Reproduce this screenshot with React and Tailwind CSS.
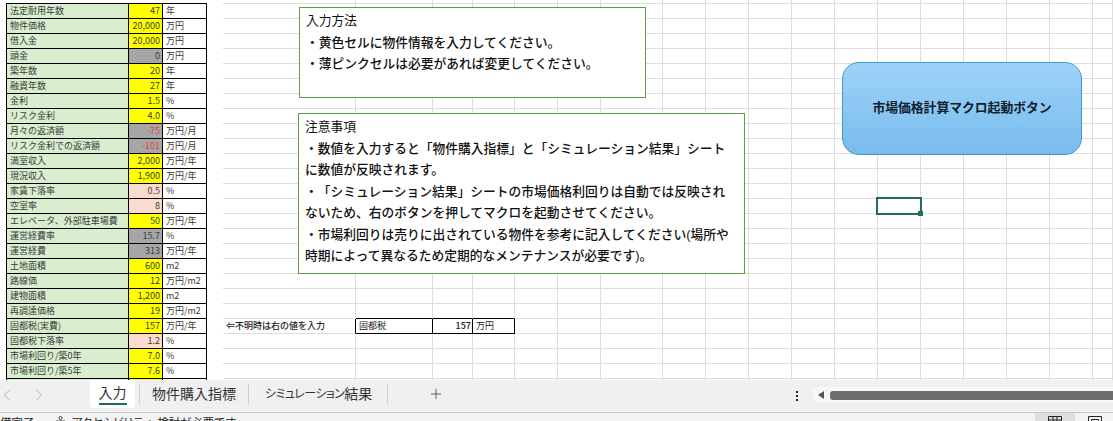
import React from "react";
import { ChevronLeft, ChevronRight, Plus } from "lucide-react";

const Y = "bg-[#ffff00]";
const G = "bg-[#a6a6a6]";
const P = "bg-[#fadccf]";

const rows = [
  ["法定耐用年数", "47", "年", Y],
  ["物件価格", "20,000", "万円", Y],
  ["借入金", "20,000", "万円", Y],
  ["頭金", "0", "万円", G],
  ["築年数", "20", "年", Y],
  ["融資年数", "27", "年", Y],
  ["金利", "1.5", "%", Y],
  ["リスク金利", "4.0", "%", Y],
  ["月々の返済額", "-75", "万円/月", G, true],
  ["リスク金利での返済額", "-101", "万円/月", G, true],
  ["満室収入", "2,000", "万円/年", Y],
  ["現況収入", "1,900", "万円/年", Y],
  ["家賃下落率", "0.5", "%", P],
  ["空室率", "8", "%", P],
  ["エレベータ、外部駐車場費", "50", "万円/年", Y],
  ["運営経費率", "15.7", "%", G],
  ["運営経費", "313", "万円/年", G],
  ["土地面積", "600", "m2", Y],
  ["路線価", "12", "万円/m2", Y],
  ["建物面積", "1,200", "m2", Y],
  ["再調達価格", "19", "万円/m2", Y],
  ["固都税(実費)", "157", "万円/年", Y],
  ["固都税下落率", "1.2", "%", P],
  ["市場利回り/築0年", "7.0", "%", Y],
  ["市場利回り/築5年", "7.6", "%", Y],
];

const COLS = 18;

const InputTable = () => (
  <div className="w-[223px] shrink-0 bg-white pl-[6px] pt-[3px]">
    <div className="grid w-[201px] grid-cols-[122px_34px_44px] border-l border-t border-black font-['Noto_Sans_CJK_JP',sans-serif] text-[9px] leading-[14px] text-[#3a3a3a]">
      {rows.map(([label, value, unit, color, minus]) => (
        <React.Fragment key={label}>
          <div className="h-[15px] whitespace-nowrap border-b border-r border-black bg-[#d8eecf] pl-[3px]">{label}</div>
          <div className={`h-[15px] border-b border-r border-black pr-[2px] text-right ${color} ${minus ? "text-[#e2403c]" : ""}`}>{value}</div>
          <div className="h-[15px] whitespace-nowrap border-b border-r border-black bg-white pl-[3px]">{unit}</div>
        </React.Fragment>
      ))}
      <div className="h-[2px] border-r border-black bg-[#d8eecf]" />
      <div className="h-[2px] border-r border-black bg-[#ffff00]" />
      <div className="h-[2px] border-r border-black bg-white" />
    </div>
  </div>
);

// blank cells of the sheet; row 21 holds the small 固都税 block
const cellBorder = (r, c) => {
  if (r === 21 && c === 0) return "border-b-[#dedede] border-r-black";
  if (r === 21 && c <= 3) return "border-b-black border-r-black";
  if (r === 20 && c >= 1 && c <= 3) return "border-b-black border-r-[#dedede]";
  return "border-b-[#dedede] border-r-[#dedede]";
};

const Sheet = () => (
  <div className="grid w-[890px] grid-cols-[133px_77px_40px_42px_43px_43px_62px_43px_43px_43px_43px_43px_43px_43px_43px_43px_43px_20px] grid-rows-[4px_repeat(25,15px)_2px] bg-white">
    {Array.from({ length: 27 * COLS }).map((_, i) => {
      const c = i % COLS;
      const r = Math.floor(i / COLS) - 1;
      const last = r === 25;
      return (
        <div
          key={i}
          className={`overflow-hidden whitespace-nowrap border-r font-['Noto_Sans_CJK_JP',sans-serif] text-[9px] leading-[14px] text-[#222] ${last ? "" : "border-b"} ${cellBorder(r, c)}`}
        >
          {r === 21 && c === 0 && <span className="pl-[3px] font-medium">⇐不明時は右の値を入力</span>}
          {r === 21 && c === 1 && <span className="pl-[3px]">固都税</span>}
          {r === 21 && c === 2 && <div className="pr-[1px] text-right font-medium">157</div>}
          {r === 21 && c === 3 && <span className="pl-[3px]">万円</span>}
        </div>
      );
    })}
  </div>
);

const Note = ({ className, lines }) => (
  <div className={`absolute border-[1.5px] border-[#5b9f3f] bg-white pl-[6px] pt-[2px] text-[12.75px] font-medium leading-[21.5px] text-[#111] [text-spacing-trim:space-all] ${className}`}>
    {lines.map((line, i) => (
      <div key={i} className={`whitespace-nowrap ${i === 0 ? "font-normal" : ""}`}>{line}</div>
    ))}
  </div>
);

const Tab = ({ children, active }) => (
  <div className={`flex h-[27px] items-center whitespace-nowrap text-[14px] text-[#333] ${active ? "relative" : ""}`}>
    {children}
    {active && <span className="absolute bottom-[2px] left-0 right-0 h-[2px] bg-[#1f6e4a]" />}
  </div>
);

const Divider = () => <div className="h-[20px] w-px bg-[#cfcfcf]" />;

export default function App() {
  return (
    <div className="flex h-[421px] w-[1113px] flex-col overflow-hidden bg-white font-['Liberation_Sans','Noto_Sans_CJK_JP',sans-serif]">
      <div className="relative flex h-[380px] shrink-0 overflow-hidden">
        <InputTable />
        <Sheet />

        <Note
          className="left-[299px] top-[7px] h-[91px] w-[347px]"
          lines={["入力方法", "・黄色セルに物件情報を入力してください。", "・薄ピンクセルは必要があれば変更してください。"]}
        />
        <Note
          className="left-[298px] top-[113px] h-[161px] w-[447px]"
          lines={[
            "注意事項",
            "・数値を入力すると「物件購入指標」と「シミュレーション結果」シート",
            "に数値が反映されます。",
            "・「シミュレーション結果」シートの市場価格利回りは自動では反映され",
            "ないため、右のボタンを押してマクロを起動させてください。",
            "・市場利回りは売りに出されている物件を参考に記入してください(場所や",
            "時期によって異なるため定期的なメンテナンスが必要です)。",
          ]}
        />

        <div className="absolute left-[842px] top-[62px] flex h-[93px] w-[240px] items-center justify-center rounded-[17px] border border-[#3f9ac9] bg-gradient-to-b from-[#9dd3f9] to-[#78bbec] pb-[1px] text-[12.8px] font-bold text-[#10202c]">
          市場価格計算マクロ起動ボタン
        </div>

        <div className="absolute left-[876px] top-[197px] h-[18px] w-[46px] border-2 border-[#23704a]">
          <span className="absolute -bottom-[3px] -right-[3px] h-[5px] w-[5px] bg-[#23704a]" />
        </div>
      </div>

      <div className="flex h-[32px] shrink-0 items-start bg-[#f0f0f0] text-[#333]">
        <div className="flex h-[30px] w-[90px] shrink-0 items-center text-[#a9a9a9]">
          <ChevronLeft size={20} strokeWidth={1.1} className="-ml-[3px]" />
          <ChevronRight size={20} strokeWidth={1.1} className="ml-[12px]" />
        </div>
        <div className="flex h-[28px] w-[45px] shrink-0 justify-center rounded-b-[4px] bg-white">
          <Tab active>入力</Tab>
        </div>
        <div className="flex h-[28px] items-center">
          <div className="ml-[4px]"><Divider /></div>
          <div className="ml-[12px] w-[84px]"><Tab>物件購入指標</Tab></div>
          <div className="ml-[12px]"><Divider /></div>
          <div className="ml-[16px] w-[108px]">
            <Tab>
              <span className="text-[12px] tracking-[-0.55px] [font-feature-settings:'palt']">シミュレーション</span>
              結果
            </Tab>
          </div>
          <div className="ml-[14px]"><Divider /></div>
          <Plus size={16} strokeWidth={1.1} className="ml-[40px] text-[#333]" />
        </div>
        <div className="ml-auto flex h-[30px] w-[320px] items-center">
          <div className="flex w-[7px] flex-col items-center gap-[2px] pt-[2px]">
            <span className="h-[2px] w-[2px] bg-[#222]" />
            <span className="h-[2px] w-[2px] bg-[#222]" />
            <span className="h-[2px] w-[2px] bg-[#222]" />
          </div>
          <div className="ml-[13px] flex h-[16px] flex-1 items-center rounded-l-[6px] bg-[#f7f7f7] pl-[5px]">
            <span className="h-0 w-0 border-y-[4.5px] border-r-[6px] border-y-transparent border-r-[#555]" />
            <span className="ml-[6px] h-[9px] flex-1 rounded-l-[3px] bg-[#6e6e6e]" />
          </div>
        </div>
      </div>

      <div className="relative flex h-[9px] shrink-0 items-start overflow-hidden border-t border-[#c8c8c8] bg-[#f3f3f3] text-[11.3px] leading-[16px] text-[#222]">
        <span className="-ml-[11px] mt-[2px] w-[66px] shrink-0 whitespace-nowrap">準備完了</span>
        <svg width="11" height="11" viewBox="0 0 11 11" className="mt-[3px] shrink-0 text-[#444]" fill="none" stroke="currentColor">
          <circle cx="5.5" cy="2" r="1.5" />
          <path d="M1 5h9M5.5 5v3" />
        </svg>
        <span className="ml-[6px] mt-[2px] whitespace-nowrap">
          <span className="[font-feature-settings:'palt']">アクセシビリティ: </span>
          検討が必要です
        </span>
        <div className="ml-auto flex h-full">
          <div className="flex h-full w-[40px] justify-center bg-[#dedede] pt-[3px]">
            <svg width="14" height="8" viewBox="0 0 14 8" fill="none" stroke="#222"><path d="M.5 8V.5h13V8M5 .5V8M9 .5V8M.5 4h13" /></svg>
          </div>
          <div className="ml-[13px] mr-[11px] w-[14px] pt-[3px]">
            <svg width="14" height="8" viewBox="0 0 14 8" fill="none" stroke="#222"><path d="M.5 8V.5h13V8M3.5 8V3.5h7V8" /></svg>
          </div>
        </div>
      </div>
    </div>
  );
}
